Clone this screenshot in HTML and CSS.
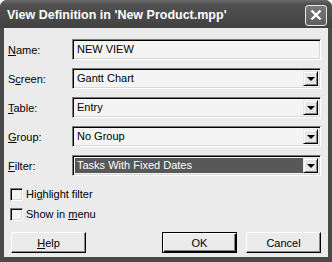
FILE: index.html
```html
<!DOCTYPE html>
<html lang="en">
<head>
  <meta charset="UTF-8">
  <title>View Definition</title>
  <link rel="stylesheet" href="styles.css">
</head>
<body>
  <div class="window">
    <div class="titlebar">
      <span class="title">View Definition in 'New Product.mpp'</span>
      <button class="close" aria-label="Close">
        <svg width="12" height="12" viewBox="0 0 12 12"><path d="M1.5 1.5 L10.5 10.5 M10.5 1.5 L1.5 10.5" stroke="#fff" stroke-width="2.4" fill="none"/></svg>
      </button>
    </div>

    <div class="client">
      <div class="form">
        <label><u>N</u>ame:</label>
        <div class="field">NEW VIEW</div>

        <label>S<u>c</u>reen:</label>
        <div class="field combo"><span class="value">Gantt Chart</span><span class="drop"></span></div>

        <label><u>T</u>able:</label>
        <div class="field combo"><span class="value">Entry</span><span class="drop"></span></div>

        <label><u>G</u>roup:</label>
        <div class="field combo"><span class="value">No Group</span><span class="drop"></span></div>

        <label><u>F</u>ilter:</label>
        <div class="field combo"><span class="value selected">Tasks With Fixed Dates</span><span class="drop"></span></div>
      </div>

      <div class="checks">
        <div class="check"><span class="box"></span><span>Hi<u>g</u>hlight filter</span></div>
        <div class="check"><span class="box"></span><span>Show in <u>m</u>enu</span></div>
      </div>

      <div class="buttons">
        <button class="btn"><u>H</u>elp</button>
        <span class="spacer"></span>
        <button class="btn default">OK</button>
        <button class="btn">Cancel</button>
      </div>
    </div>
  </div>
</body>
</html>
```

FILE: styles.css
```css
body {
  margin: 0;
  background: #fff;
  font-family: 'Liberation Sans', Arial, sans-serif;
  font-size: 11px;
  color: #000;
}
.window {
  width: 332px;
  height: 262px;
  background: #4a4a4a;
  border-radius: 7px 7px 0 0;
  display: flex;
  flex-direction: column;
  overflow: hidden;
}
.titlebar {
  height: 28px;
  display: flex;
  align-items: center;
  padding: 0 5px 0 7px;
  background: linear-gradient(#6c6c6c, #505050 15%, #484848 70%, #404040);
}
.title {
  flex: 1;
  color: #fff;
  font-weight: bold;
  font-size: 12.5px;
  padding-top: 2px;
}
.close {
  width: 22px;
  height: 21px;
  margin-top: 2px;
  padding: 0;
  border: 1px solid #e8e8e8;
  border-radius: 3px;
  background: linear-gradient(#7a7a7a, #5e5e5e);
  display: flex;
  align-items: center;
  justify-content: center;
}
.client {
  flex: 1;
  margin: 0 4px 5px;
  background: #ebebeb;
  padding: 11px 7px 0 4px;
}
.form {
  display: grid;
  grid-template-columns: 64px 1fr;
  grid-auto-rows: 21px;
  row-gap: 8px;
  align-items: center;
}
.field {
  height: 21px;
  box-sizing: border-box;
  background: #f4f4f4;
  border-top: 1px solid #7a7a7a;
  border-left: 1px solid #7a7a7a;
  border-right: 1px solid #fff;
  border-bottom: 1px solid #fff;
  box-shadow: inset 1px 1px 0 #000, inset -1px -1px 0 #d8d8d8;
  padding: 3px 4px 0 4px;
  display: flex;
}
.combo {
  padding: 2px;
}
.value {
  flex: 1;
  padding: 1px 2px 0 2px;
}
.value.selected {
  background: #585858;
  color: #fff;
}
.drop {
  width: 15px;
  box-sizing: border-box;
  background: #e6e6e6;
  border-top: 1px solid #e8e8e8;
  border-left: 1px solid #e8e8e8;
  border-right: 1px solid #000;
  border-bottom: 1px solid #000;
  box-shadow: inset 1px 1px 0 #fff, inset -1px -1px 0 #888;
  display: flex;
  align-items: center;
  justify-content: center;
}
.drop::after {
  content: "";
  border-left: 4px solid transparent;
  border-right: 4px solid transparent;
  border-top: 4px solid #000;
  margin-top: 1px;
}
.checks {
  margin-top: 8px;
  padding-left: 2px;
}
.check {
  height: 20px;
  display: flex;
  align-items: center;
}
.box {
  width: 13px;
  height: 13px;
  box-sizing: border-box;
  margin-right: 3px;
  background: #f4f4f4;
  border-top: 1px solid #7a7a7a;
  border-left: 1px solid #7a7a7a;
  border-right: 1px solid #fff;
  border-bottom: 1px solid #fff;
  box-shadow: inset 1px 1px 0 #000, inset -1px -1px 0 #d8d8d8;
}
.buttons {
  margin-top: 8px;
  padding-left: 3px;
  display: flex;
  gap: 9px;
}
.spacer {
  flex: 1;
}
.btn {
  width: 75px;
  height: 21px;
  padding: 0;
  font-family: inherit;
  font-size: 11px;
  color: #000;
  background: #ebebeb;
  border-top: 1px solid #fff;
  border-left: 1px solid #fff;
  border-right: 1px solid #000;
  border-bottom: 1px solid #000;
  box-shadow: inset -1px -1px 0 #888;
}
.btn.default {
  border: 1px solid #000;
  box-shadow: inset 1px 1px 0 #fff, inset -1px -1px 0 #000, inset -2px -2px 0 #888;
}
```
